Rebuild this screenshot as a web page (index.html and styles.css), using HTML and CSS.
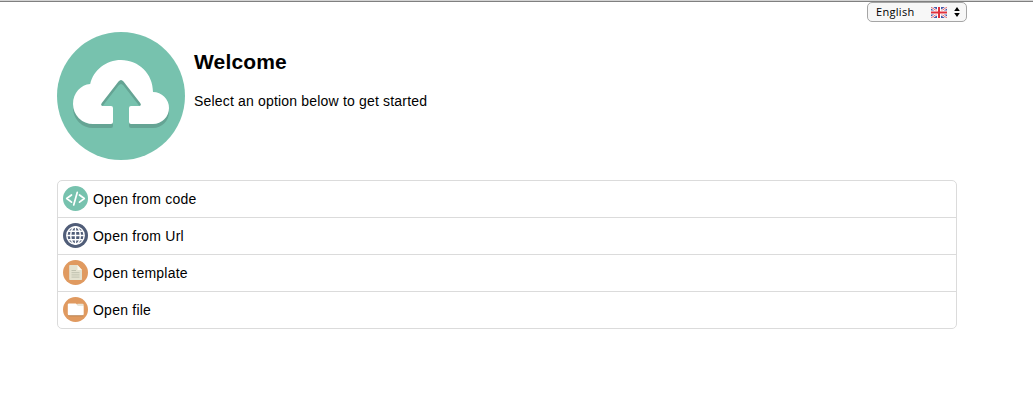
FILE: index.html
```html
<!DOCTYPE html>
<html lang="en">
<head>
<meta charset="utf-8">
<title>Welcome</title>
<link rel="stylesheet" href="styles.css">
</head>
<body>
<header class="topbar">
  <button class="language" type="button">
    <span class="language-name">English</span>
    <svg class="flag" viewBox="0 0 16 11">
      <path fill="#4659a8" d="M0 0h16v11H0z"/>
      <path stroke="#fff" stroke-width="2.4" d="M0 0l16 11M16 0L0 11"/>
      <path stroke="#e0575f" stroke-width=".9" d="M0 0l16 11M16 0L0 11"/>
      <path fill="#fff" d="M6 0h4v11H6zM0 3.500h16v4H0z"/>
      <path fill="#e0303c" d="M7 0h2v11H7zM0 4.500h16v2H0z"/>
    </svg>
    <svg class="arrows" viewBox="0 0 6 10"><path d="M3 0l2.800 4H.2zM3 10l2.800-4H.2z"/></svg>
  </button>
</header>
<main class="page">
  <section class="intro">
    <svg class="hero" viewBox="0 0 128 128">
      <defs>
        <path id="cloud" d="M36 92A20 20 0 0 1 16 72C16 61 24 52.5 33.2 52C36.5 38 49 28 64 28C82 28 96 42 96 60A16 16 0 0 1 96 92H74Q72 92 72 90V76Q72 74 74 74H82Q85 73.500 83.200 71L66.500 49.500Q64 46.500 61.500 49.500L44.800 71Q43 73.500 46 74H54Q56 74 56 76V90Q56 92 54 92Z"/>
      </defs>
      <circle cx="64" cy="64" r="64" fill="#77c2ae"/>
      <use href="#cloud" y="4" fill="#65a494"/>
      <use href="#cloud" fill="#fff"/>
    </svg>
    <div class="greeting">
      <h1>Welcome</h1>
      <p>Select an option below to get started</p>
    </div>
  </section>
  <ul class="options">
    <li>
      <svg class="icon" viewBox="0 0 25 25">
        <circle cx="12.500" cy="12.500" r="12.500" fill="#77c2ae"/>
        <path fill="none" stroke="#fff" stroke-width="1.700" stroke-linecap="round" stroke-linejoin="round" d="M8.500 9L3.700 12.500l4.800 3.700M16.500 9l4.800 3.500-4.800 3.700M14.300 6.300l-3.600 12.600"/>
      </svg>
      <span>Open from code</span>
    </li>
    <li>
      <svg class="icon" viewBox="0 0 25 25">
        <circle cx="12.500" cy="12.500" r="12.500" fill="#505d78"/>
        <g fill="none" stroke="#fff" stroke-width="1.400">
          <circle cx="12.500" cy="12.500" r="8.700"/>
          <ellipse cx="12.500" cy="12.500" rx="4.800" ry="8.700"/>
          <path d="M12.500 3.800v17.400M3.800 12.500h17.400M5.200 8.200h14.600M5.200 16.800h14.600"/>
        </g>
      </svg>
      <span>Open from Url</span>
    </li>
    <li>
      <svg class="icon" viewBox="0 0 25 25">
        <circle cx="12.500" cy="12.500" r="12.500" fill="#e09a60"/>
        <path fill="#e4e2d0" d="M7 5h7.500l4.500 5v9.300q0 .7-.7.700H7q-.8 0-.8-.7V5.700Q6.200 5 7 5z"/>
        <path fill="#fbf9ef" d="M14.500 5l4.500 5h-4.500z"/>
        <path stroke="#bbbdac" stroke-width=".9" d="M8.500 10.500h4.500M8.500 12.700h8M8.500 14.900h8M8.500 17.100h8"/>
      </svg>
      <span>Open template</span>
    </li>
    <li>
      <svg class="icon" viewBox="0 0 25 25">
        <circle cx="12.500" cy="12.500" r="12.500" fill="#e09a60"/>
        <path fill="#b9804f" d="M5.500 18h14.500v1.300H5.500z"/>
        <path fill="#e9e5d8" d="M13.500 9l1-2.300h5q1.200 0 1.200 1.200V10z"/>
        <path fill="#fff" d="M6 6.500h6.800q1 0 1.300 1.500.2 1 1.200 1h4.200q1.200 0 1.200 1.200V17q0 1.300-1.200 1.300H6q-1.200 0-1.200-1.300V7.600Q4.800 6.500 6 6.500z"/>
      </svg>
      <span>Open file</span>
    </li>
  </ul>
</main>
</body>
</html>
```
FILE: styles.css
```css
* { box-sizing: border-box; }
body {
  margin: 0;
  background: #fff;
  color: #000;
  font: 14px "Liberation Sans", Arial, sans-serif;
}
svg { display: block; flex: none; }
.topbar {
  display: flex;
  justify-content: flex-end;
  height: 32px;
  padding-right: 66px;
  background: linear-gradient(#d4d4d4 1px, #808080 1px, #808080 2px, #fff 2px);
}
.language {
  display: flex;
  align-items: center;
  width: 100px;
  height: 20px;
  margin-top: 2px;
  padding: 0 5px 0 8px;
  border: 1px solid #a5a5a5;
  border-radius: 5px;
  background: #f7f7f7;
  color: #000;
  font: 11px "Open Sans", sans-serif;
}
.language-name {
  width: 55px;
  padding-bottom: 2px;
  text-align: left;
  letter-spacing: .3px;
}
.flag { width: 16px; height: 11px; margin-top: 1px; }
.arrows { width: 6px; height: 10px; margin-left: 7px; }
.page { width: 900px; margin-left: 57px; }
.intro { display: flex; gap: 9px; height: 148px; }
.hero { width: 128px; height: 128px; }
.greeting h1 {
  margin: 18px 0 0;
  font-size: 21px;
  line-height: 24px;
  letter-spacing: .15px;
}
.greeting p {
  margin: 19px 0 0;
  line-height: 16px;
  letter-spacing: .18px;
}
.options {
  margin: 0;
  padding: 0;
  border: 1px solid #dbdbdb;
  border-radius: 5px;
  list-style: none;
}
.options li {
  display: flex;
  align-items: flex-start;
  gap: 5px;
  height: 37px;
  padding: 5px 5px 0;
  border-bottom: 1px solid #dbdbdb;
}
.options li:last-child { height: 36px; border-bottom: 0; }
.options span { line-height: 26px; letter-spacing: .23px; }
.icon { width: 25px; height: 25px; }
```
